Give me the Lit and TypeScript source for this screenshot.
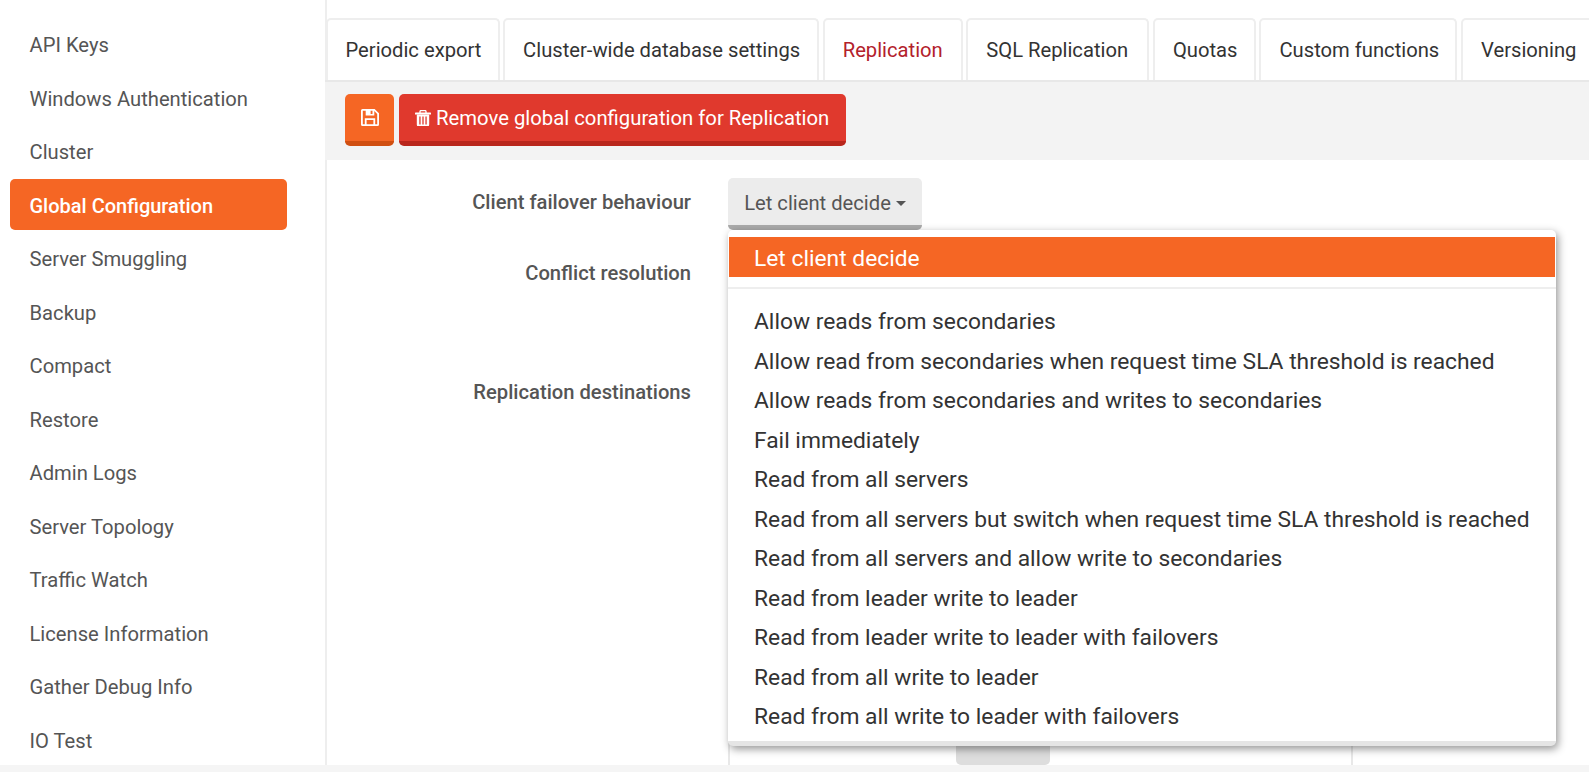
import { LitElement, html, css, svg } from "lit";
import { customElement } from "lit/decorators.js";

const NAV = ["API Keys","Windows Authentication","Cluster","Global Configuration","Server Smuggling","Backup","Compact","Restore","Admin Logs","Server Topology","Traffic Watch","License Information","Gather Debug Info","IO Test"];
const TABS = ["Periodic export","Cluster-wide database settings","Replication","SQL Replication","Quotas","Custom functions","Versioning"];
const WIDTHS = [174,316,140,183,103,198,140];
const OPTIONS = ["Allow reads from secondaries","Allow read from secondaries when request time SLA threshold is reached","Allow reads from secondaries and writes to secondaries","Fail immediately","Read from all servers","Read from all servers but switch when request time SLA threshold is reached","Read from all servers and allow write to secondaries","Read from leader write to leader","Read from leader write to leader with failovers","Read from all write to leader","Read from all write to leader with failovers"];

const saveIcon = svg`<svg class="ico-save" viewBox="0 0 18 17" fill="currentColor" fill-rule="evenodd"><path d="M1.5 0H13.6L18 4.2V15.5Q18 17 16.5 17H1.5Q0 17 0 15.5V1.5Q0 0 1.5 0Z M1.8 1.8V15.2H3.8V9.3H14.2V15.2H16.2V5L13.3 2V6.5H4.7V1.8Z M5.6 11.1H12.4V15.2H5.6Z M9.6 1.8H11.5V4.9H9.6Z"/></svg>`;
const trashIcon = svg`<svg class="ico-trash" viewBox="0 0 16 16.5"><path d="M5 3V1.6Q5 .6 6 .6H10Q11 .6 11 1.6V3" fill="none" stroke="currentColor" stroke-width="1.3"/><path d="M.6 2.6H15.4Q16 2.6 16 3.2V4.4H0V3.2Q0 2.6.6 2.6Z" fill="currentColor"/><path fill="currentColor" fill-rule="evenodd" d="M1.8 4.4H14.2V14.6Q14.2 16.5 12.5 16.5H3.5Q1.8 16.5 1.8 14.6Z M4.3 6.4H5.6V14.4H4.3Z M7.35 6.4H8.65V14.4H7.35Z M10.4 6.4H11.7V14.4H10.4Z"/></svg>`;

@customElement("app-root")
export class AppRoot extends LitElement {
  static styles = css`
    :host { display: block; height: 772px; overflow: hidden; background: #fff; font-family: Roboto, "Liberation Sans", sans-serif; }
    .page { display: grid; grid-template-columns: 325px 1fr; height: 765px; overflow: hidden; }
    .side { padding: 18.7px 38px 0 10px; border-right: 2px solid #eee; width: 277px; box-sizing: content-box; }
    .nav { height: 53.5px; display: flex; align-items: center; padding: 0 0 0 19.5px; font-size: 20.2px; color: #555; border-radius: 5px; box-sizing: border-box; white-space: nowrap; }
    .nav.active { background: #f56624; color: #fff; font-weight: 500; font-size: 20px; height: 51px; padding-top: 2px; margin-bottom: 2.5px; }
    .main { padding-top: 18px; min-width: 0; display: flex; flex-direction: column; }
    .tabs { display: flex; gap: 3.6px; height: 62px; border-bottom: 2px solid #e8e8e8; padding-left: 0.5px; box-sizing: content-box; }
    .tab { flex: none; display: flex; align-items: center; padding: 0 0 0 18px; font-size: 20.2px; color: #333; border: 2px solid #eee; border-bottom: none; border-radius: 5px 5px 0 0; box-sizing: border-box; white-space: nowrap; }
    .tab.active { color: #b3212b; }
    .toolbar { height: 78px; background: #f3f3f3; padding: 12px 0 0 20px; box-sizing: border-box; display: flex; gap: 5px; align-items: flex-start; }
    .btn { height: 52px; border-radius: 5px; color: #fff; font-size: 20.3px; display: flex; align-items: center; box-sizing: border-box; white-space: nowrap; border-bottom: 5px solid; }
    .btn.save { width: 49px; background: #f56624; border-color: #d04f11; justify-content: center; }
    .btn.del { width: 447px; background: #e0392d; border-color: #b9261c; gap: 5px; padding: 1px 0 0 16px; }
    .ico-save { width: 18px; height: 17px; }
    .ico-trash { width: 16px; height: 16.5px; }
    .form { position: relative; flex: 1; min-height: 0; padding-top: 18px; display: flex; flex-direction: column; }
    .row { display: grid; grid-template-columns: 366px 625px; column-gap: 37px; }
    .label { text-align: right; font-size: 20.2px; font-weight: 500; color: #555; }
    .r1 { height: 68px; }
    .r1 .label { padding-top: 11.5px; }
    .r2 { height: 122px; }
    .r2 .label { padding-top: 15px; }
    .r3 { flex: 1; min-height: 0; }
    .r3 .label { padding-top: 11.5px; }
    .drop { height: 52px; width: 194px; background: #ececec; border-bottom: 5px solid #aaa; border-radius: 5px; box-sizing: border-box; display: flex; align-items: center; justify-content: center; gap: 5px; padding-top: 2px; font-size: 20.2px; color: #555; }
    .caret { width: 0; height: 0; border: 5.5px solid transparent; border-top-color: #555; border-bottom: none; margin-top: 2px; }
    .menu { position: absolute; z-index: 2; left: 403px; top: 70px; width: 828px; height: 516px; box-sizing: border-box; background: #fff; border-bottom: 5px solid #e5e5e5; border-radius: 5px; box-shadow: 2px 3px 9px rgba(0,0,0,.42); padding-top: 7px; }
    .opt { height: 39.5px; display: flex; align-items: center; padding-left: 26px; font-size: 22.8px; color: #333; white-space: nowrap; }
    .opt.sel { background: #f56624; color: #fff; height: 40px; margin: 0 1px; padding: 2px 0 0 25px; box-sizing: border-box; }
    .sep { height: 2px; background: #eee; margin: 10px 0 13.2px; }
    .panel { border: solid #e8e8e8; border-width: 0 2px; box-sizing: border-box; display: flex; align-items: flex-end; }
    .peek { width: 94px; height: 40px; margin: 0 0 3px 226px; background: #ddd; border-radius: 5px; }
    .foot { height: 7px; background: #f5f5f5; }
  `;
  render() {
    return html`
      <div class="page">
        <aside class="side">${NAV.map(n => html`<div class="nav ${n === "Global Configuration" ? "active" : ""}">${n}</div>`)}</aside>
        <main class="main">
          <div class="tabs">${TABS.map((t, i) => html`<div class="tab ${t === "Replication" ? "active" : ""}" style="width:${WIDTHS[i]}px">${t}</div>`)}</div>
          <div class="toolbar">
            <div class="btn save">${saveIcon}</div>
            <div class="btn del">${trashIcon}<span>Remove global configuration for Replication</span></div>
          </div>
          <div class="form">
            <div class="row r1"><div class="label">Client failover behaviour</div><div class="drop">Let client decide<span class="caret"></span></div></div>
            <div class="row r2"><div class="label">Conflict resolution</div><div></div></div>
            <div class="row r3"><div class="label">Replication destinations</div><div class="panel"><div class="peek"></div></div></div>
            <div class="menu">
              <div class="opt sel">Let client decide</div>
              <div class="sep"></div>
              ${OPTIONS.map(o => html`<div class="opt">${o}</div>`)}
            </div>
          </div>
        </main>
      </div>
      <div class="foot"></div>`;
  }
}
